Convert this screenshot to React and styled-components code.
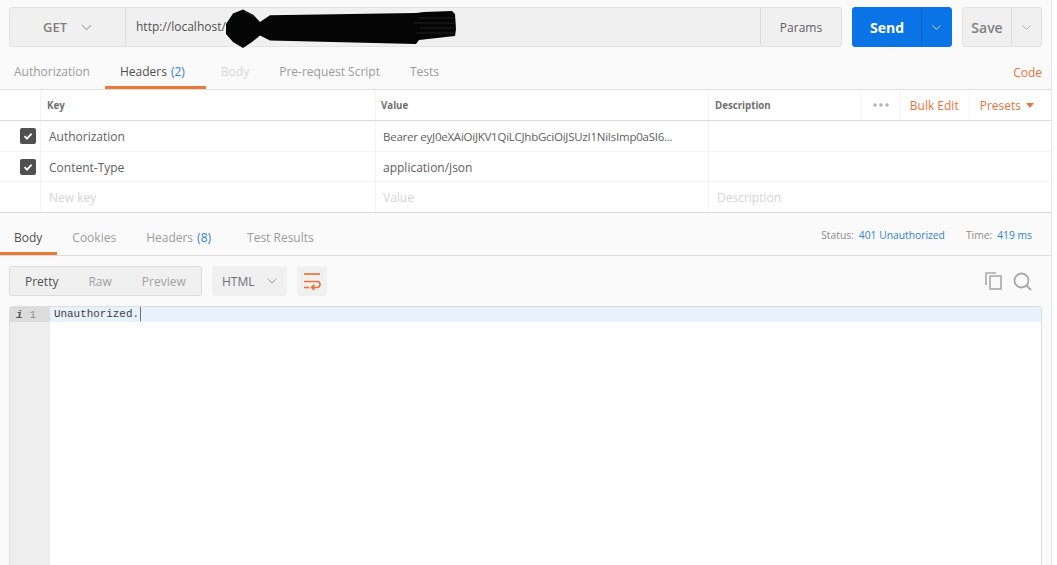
import styled, { createGlobalStyle } from "styled-components";
import { ChevronDown } from "lucide-react";

const Global = createGlobalStyle`
  html, body {
    margin: 0;
    padding: 0;
    height: 100%;
    overflow: hidden;
    background: #fff;
  }
  * { box-sizing: border-box; }
`;

const Page = styled.div`
  width: 1052px;
  height: 565px;
  background: #fafafa;
  border-right: 1px solid #e6e6e6;
  font-family: "Open Sans", sans-serif;
  font-size: 12px;
  color: #505050;
  overflow: hidden;
`;

const UrlBar = styled.div`
  display: flex;
  height: 40px;
  margin: 7px 0 0 9px;
`;

const UrlGroup = styled.div`
  display: flex;
  width: 833px;
  background: #f0f0f0;
  border: 1px solid #e2e2e2;
  border-radius: 3px;
`;

const Method = styled.div`
  width: 116px;
  display: flex;
  align-items: center;
  gap: 11px;
  padding-left: 33px;
  border-right: 1px solid #dcdcdc;
  font-size: 13px;
  font-weight: 600;
  color: #808080;
`;

const UrlField = styled.div`
  position: relative;
  flex: 1;
  padding-left: 10px;
  line-height: 38px;
  font-size: 12px;
  color: #505050;
`;

const Scribble = styled.svg`
  position: absolute;
  left: 98px;
  top: 1px;
`;

const Params = styled.div`
  width: 81px;
  border-left: 1px solid #dcdcdc;
  text-align: center;
  line-height: 39px;
  font-size: 12px;
  color: #606060;
`;

const SplitButton = styled.div`
  display: flex;
  height: 40px;
  width: ${({ $w }) => $w}px;
  margin-left: 10px;
  border-radius: 3px;
  background: ${({ $primary }) => ($primary ? "#0a74e6" : "#f0f0f0")};
  border: 1px solid ${({ $primary }) => ($primary ? "#0a74e6" : "#e2e2e2")};
  color: ${({ $primary }) => ($primary ? "#fff" : "#808080")};
`;

const SplitLabel = styled.div`
  flex: 1;
  display: flex;
  align-items: center;
  justify-content: center;
  font-size: 14px;
  font-weight: ${({ $primary }) => ($primary ? 700 : 600)};
`;

const SplitArrow = styled.div`
  width: ${({ $w }) => $w}px;
  display: flex;
  align-items: center;
  justify-content: center;
  border-left: 1px solid ${({ $primary }) => ($primary ? "#0862c4" : "#dcdcdc")};
  color: ${({ $primary }) => ($primary ? "#bcdcff" : "#a8a8a8")};
`;

const TabRow = styled.div`
  display: flex;
  justify-content: space-between;
  align-items: stretch;
  height: ${({ $h }) => $h}px;
  border-bottom: 1px solid #dcdcdc;
`;

const Tabs = styled.div`
  display: flex;
`;

const Tab = styled.div`
  display: flex;
  align-items: center;
  height: 100%;
  padding: 9px ${({ $right }) => $right || 15}px 0 ${({ $left }) => $left || 15}px;
  font-size: 12px;
  color: ${({ $active, $disabled }) =>
    $active ? "#505050" : $disabled ? "#d8d8d8" : "#9a9a9a"};
  border-bottom: 3px solid ${({ $active }) => ($active ? "#e87a35" : "transparent")};
`;

const Count = styled.span`
  margin-left: 4px;
  color: #2f7fd4;
`;

const CodeLink = styled.div`
  align-self: flex-end;
  margin-right: 9px;
  margin-bottom: 8px;
  font-size: 12px;
  color: #e8743b;
`;

const Table = styled.div`
  background: #fff;
  border-bottom: 1px solid #dcdcdc;
`;

const TableRow = styled.div`
  display: grid;
  grid-template-columns: 40px 335px 333px 1fr;
  height: ${({ $h }) => $h || 30}px;
  border-bottom: 1px solid ${({ $head }) => ($head ? "#dcdcdc" : "#f2f2f2")};

  &:last-child {
    border-bottom: 0;
  }
`;

const CheckCell = styled.div`
  display: flex;
  align-items: center;
  justify-content: flex-end;
  padding-right: 4px;
`;

const Check = styled.div`
  width: 16px;
  height: 16px;
  border-radius: 2px;
  background: #505050;
  display: flex;
  align-items: center;
  justify-content: center;
`;

const Cell = styled.div`
  display: flex;
  align-items: center;
  padding-left: ${({ $pad }) => $pad || 8}px;
  padding-top: ${({ $head }) => ($head ? 0 : 1)}px;
  border-left: 1px solid #f2f2f2;
  font-size: ${({ $head, $tight }) => ($head ? "9.7px" : $tight ? "11.5px" : "12px")};
  letter-spacing: ${({ $tight }) => ($tight ? "-0.25px" : "0")};
  font-weight: ${({ $head }) => ($head ? 700 : 400)};
  color: ${({ $head, $ghost }) => ($head ? "#707070" : $ghost ? "#d4d4d4" : "#606060")};
  white-space: nowrap;
  overflow: hidden;
`;

const HeadActions = styled.div`
  margin-left: auto;
  display: flex;
  align-items: center;
  height: 100%;
  font-size: 12px;
  font-weight: 400;
  color: #e8743b;
`;

const HeadAction = styled.div`
  display: flex;
  align-items: center;
  gap: 5px;
  height: 100%;
  padding: 0 ${({ $right }) => $right || 10}px 0 ${({ $left }) => $left || 10}px;
  border-left: 1px solid #f5f5f5;
`;

const Caret = styled.span`
  width: 0;
  height: 0;
  border-left: 4px solid transparent;
  border-right: 4px solid transparent;
  border-top: 5px solid #e8743b;
`;

const Meta = styled.div`
  display: flex;
  gap: 21px;
  padding: 15px 19px 0 0;
  font-size: 10.3px;
  color: #8a8a8a;
`;

const MetaValue = styled.span`
  margin-left: 5px;
  color: #2f7fd4;
`;

const Toolbar = styled.div`
  display: flex;
  align-items: center;
  height: 30px;
  margin: 10px 0 0 9px;
  gap: 10px;
`;

const ViewGroup = styled.div`
  display: flex;
  align-items: center;
  width: 193px;
  height: 30px;
  padding-left: 15px;
  gap: 30px;
  background: #f0f0f0;
  border: 1px solid #dcdcdc;
  border-radius: 3px;
`;

const ViewItem = styled.span`
  font-size: 12px;
  color: ${({ $active }) => ($active ? "#505050" : "#a0a0a0")};
`;

const LangSelect = styled.div`
  display: flex;
  align-items: center;
  gap: 9px;
  width: 75px;
  height: 30px;
  padding-left: 10px;
  background: #f0f0f0;
  border-radius: 3px;
  font-size: 12px;
  color: #707070;
`;

const WrapButton = styled.div`
  display: flex;
  align-items: center;
  justify-content: center;
  width: 30px;
  height: 30px;
  background: #f0f0f0;
  border-radius: 3px;
`;

const ToolIcons = styled.div`
  margin-left: auto;
  display: flex;
  align-items: center;
  gap: 10px;
  margin-right: 19px;
`;

const Editor = styled.div`
  display: flex;
  height: 260px;
  margin: 10px 9px 0 9px;
  background: #fff;
  border: 1px solid #dedede;
  border-bottom: 0;
  border-radius: 3px 3px 0 0;
`;

const Gutter = styled.div`
  width: 40px;
  background: #eeeeee;
`;

const GutterLine = styled.div`
  display: flex;
  align-items: center;
  height: 15px;
  padding-left: 6px;
  gap: 7px;
  background: #dcdcdc;
  font-family: "Liberation Mono", monospace;
  font-size: 11px;
  color: #909090;
`;

const InfoMark = styled.span`
  font-weight: 700;
  font-style: italic;
  color: #555;
`;

const Code = styled.div`
  flex: 1;
`;

const CodeLine = styled.div`
  height: 15px;
  line-height: 15px;
  padding-left: 4px;
  background: #e8f2fc;
  font-family: "Liberation Mono", monospace;
  font-size: 10.9px;
  color: #404040;
`;

const Cursor = styled.span`
  display: inline-block;
  width: 1px;
  height: 14px;
  margin-left: 1px;
  vertical-align: top;
  background: #707070;
`;

function CheckIcon() {
  return (
    <svg width="10" height="10" viewBox="0 0 10 10" fill="none">
      <path d="M1.5 5.2 L4 7.6 L8.6 2.6" stroke="#fff" strokeWidth="1.8" />
    </svg>
  );
}

function HeaderRow({ name, value, ghost, h, tight }) {
  return (
    <TableRow $h={h}>
      <CheckCell>
        {!ghost && (
          <Check>
            <CheckIcon />
          </Check>
        )}
      </CheckCell>
      <Cell $ghost={ghost}>{name}</Cell>
      <Cell $ghost={ghost} $pad={7} $tight={tight}>{value}</Cell>
      <Cell $ghost={ghost}>{ghost ? "Description" : ""}</Cell>
    </TableRow>
  );
}

export default function App() {
  return (
    <Page>
      <Global />
      <UrlBar>
        <UrlGroup>
          <Method>
            GET
            <ChevronDown size={17} strokeWidth={1.5} color="#a8a8a8" />
          </Method>
          <UrlField>
            http://localhost/
            <Scribble width="240" height="40" viewBox="0 0 240 40">
              <path
                d="M2 15 L9 4.5 L19 0.5 L29.5 6 L36 13 L46 6.2 L192 4 L200 3 L228 2 L231 5 L232 20 L231 27 L195 31 L192 35 L46 31.5 L36 26.5 L28 33 L19 39 L9 33 L2 25 Z"
                fill="#050505"
              />
              <path
                d="M195 9 H230 M190 14 H231 M196 19 H232 M192 24 H230 M20 2 L30 8"
                stroke="#4a4a4a"
                strokeWidth="0.7"
                opacity="0.6"
              />
            </Scribble>
          </UrlField>
          <Params>Params</Params>
        </UrlGroup>
        <SplitButton $primary $w={100}>
          <SplitLabel $primary>Send</SplitLabel>
          <SplitArrow $primary $w={30}>
            <ChevronDown size={15} strokeWidth={1.6} />
          </SplitArrow>
        </SplitButton>
        <SplitButton $w={80}>
          <SplitLabel>Save</SplitLabel>
          <SplitArrow $w={30}>
            <ChevronDown size={15} strokeWidth={1.6} />
          </SplitArrow>
        </SplitButton>
      </UrlBar>

      <TabRow $h={43}>
        <Tabs>
          <Tab $left={14}>Authorization</Tab>
          <Tab $right={21} $active>
            Headers<Count>(2)</Count>
          </Tab>
          <Tab $disabled>Body</Tab>
          <Tab>Pre-request Script</Tab>
          <Tab>Tests</Tab>
        </Tabs>
        <CodeLink>Code</CodeLink>
      </TabRow>

      <Table>
        <TableRow $head $h={31}>
          <div />
          <Cell $head $pad={6}>Key</Cell>
          <Cell $head $pad={5}>Value</Cell>
          <Cell $head $pad={6}>
            Description
            <HeadActions>
              <HeadAction $left={11}>
                <svg width="16" height="4" viewBox="0 0 16 4" fill="#b4b4b4">
                  <circle cx="2" cy="2" r="1.8" />
                  <circle cx="8" cy="2" r="1.8" />
                  <circle cx="14" cy="2" r="1.8" />
                </svg>
              </HeadAction>
              <HeadAction>Bulk Edit</HeadAction>
              <HeadAction $right={17}>
                Presets
                <Caret />
              </HeadAction>
            </HeadActions>
          </Cell>
        </TableRow>
        <HeaderRow
          h={31}
          tight
          name="Authorization"
          value="Bearer eyJ0eXAiOiJKV1QiLCJhbGciOiJSUzI1NiIsImp0aSI6..."
        />
        <HeaderRow name="Content-Type" value="application/json" />
        <HeaderRow name="New key" value="Value" ghost />
      </Table>

      <TabRow $h={43}>
        <Tabs>
          <Tab $left={14} $active>Body</Tab>
          <Tab>Cookies</Tab>
          <Tab>
            Headers<Count>(8)</Count>
          </Tab>
          <Tab $left={21} $right={20}>Test Results</Tab>
        </Tabs>
        <Meta>
          <span>
            Status:<MetaValue>401 Unauthorized</MetaValue>
          </span>
          <span>
            Time:<MetaValue>419 ms</MetaValue>
          </span>
        </Meta>
      </TabRow>

      <Toolbar>
        <ViewGroup>
          <ViewItem $active>Pretty</ViewItem>
          <ViewItem>Raw</ViewItem>
          <ViewItem>Preview</ViewItem>
        </ViewGroup>
        <LangSelect>
          HTML
          <ChevronDown size={16} strokeWidth={1.5} color="#a0a0a0" />
        </LangSelect>
        <WrapButton>
          <svg width="18" height="18" viewBox="0 0 18 18" fill="none" stroke="#e8743b" strokeWidth="1.7">
            <path d="M1 2 H17" />
            <path d="M1 9.5 H14 a3 3 0 0 1 0 6 H9" />
            <path d="M11.5 13 L8.5 15.5 L11.5 18" />
            <path d="M1 15.5 H6" />
          </svg>
        </WrapButton>
        <ToolIcons>
          <svg width="18" height="18" viewBox="0 0 18 18" fill="none" stroke="#a8a8a8" strokeWidth="1.6">
            <path d="M1 13 V1 H11" />
            <rect x="5" y="4" width="11" height="13" />
          </svg>
          <svg width="19" height="19" viewBox="0 0 19 19" fill="none" stroke="#a8a8a8" strokeWidth="1.8">
            <circle cx="8.5" cy="8.5" r="7" />
            <path d="M13.5 13.5 L18 18" />
          </svg>
        </ToolIcons>
      </Toolbar>

      <Editor>
        <Gutter>
          <GutterLine>
            <InfoMark>i</InfoMark>
            <span>1</span>
          </GutterLine>
        </Gutter>
        <Code>
          <CodeLine>
            Unauthorized.
            <Cursor />
          </CodeLine>
        </Code>
      </Editor>
    </Page>
  );
}
